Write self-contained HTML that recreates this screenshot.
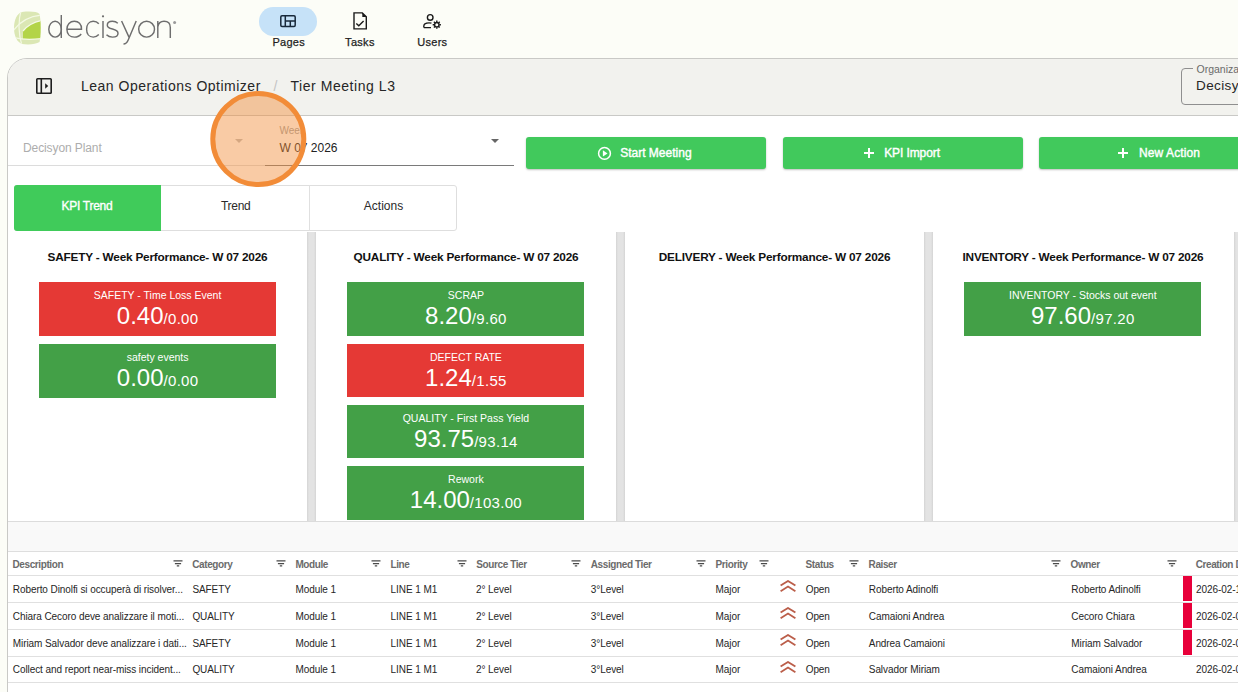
<!DOCTYPE html>
<html><head><meta charset="utf-8">
<style>
*{box-sizing:border-box;margin:0;padding:0}
html,body{width:1238px;height:692px;overflow:hidden;background:#fcfdf7;font-family:"Liberation Sans",sans-serif;color:#222;position:relative}
.a{position:absolute}
.t{position:absolute;white-space:nowrap;line-height:1}
#card{position:absolute;left:7px;top:58px;width:1300px;height:700px;border:1px solid #c9c9c6;border-top-left-radius:20px;background:#fff;overflow:hidden}
#hdr{position:absolute;left:0;top:0;width:100%;height:57px;background:#f2f2ee;border-bottom:1px solid #c9c9c6}
.kpi{position:absolute;width:237px;height:53.6px;color:#fff;text-align:center}
.red{background:#e53935}
.grn{background:#43a047}
.btn{position:absolute;top:137px;height:32px;width:240px;background:#41c95c;border-radius:3px;color:#fff;font-size:12px;box-shadow:0 1px 2px rgba(0,0,0,.25)}
.sep{position:absolute;top:231.5px;height:289.5px;background:linear-gradient(to right,#d4d4d4,#e3e3e3 22%,#e3e3e3 78%,#d4d4d4)}
.ptl{top:252.1px;font-size:11.8px;letter-spacing:-0.2px;font-weight:bold;text-align:center;color:#111}
.kl{left:0;width:100%;top:8.1px;font-size:10.5px;text-align:center;color:#fff}
.kv{left:0;width:100%;top:22px;text-align:center;color:#fff}
.kv .b{font-size:24px}
.kv .s{font-size:15px;letter-spacing:0.3px}
.th{top:559.5px;font-size:10px;font-weight:bold;color:#6b6b6b;letter-spacing:-0.4px}
.td{font-size:10px;color:#262626;letter-spacing:-0.08px}
</style></head><body>

<svg class="a" style="left:0;top:0" width="240" height="56" viewBox="0 0 240 56">
  <!-- sphere logo -->
  <defs><clipPath id="lg"><path d="M22 12 C30 11.2 37 11.5 39.5 14 C41 20 41 36 39.5 42 C36 44.5 28 44.8 22 44 C17 42 14 36 14 28 C14 20 17 13.5 22 12 Z"/></clipPath></defs>
  <g clip-path="url(#lg)">
    <rect x="10" y="8" width="34" height="40" fill="#dbe7b4"/>
    <path d="M23 31 C28 25 34 22 42 20.5 L42 38.5 C35 39.5 29 39.5 23 39 Z" fill="#b3d448"/>
    <path d="M13 31 C20 21 30 16 42 15" stroke="#f4f9e4" stroke-width="1.2" fill="none"/>
    <path d="M23 31 C28 25 34 22 42 20.5" stroke="#f4f9e4" stroke-width="1.2" fill="none"/>
    <path d="M21.5 9 C18 20 18 36 23 48" stroke="#f4f9e4" stroke-width="1.2" fill="none"/>
    <path d="M12 37 C20 39.5 30 40 42 38.5" stroke="#f4f9e4" stroke-width="1.2" fill="none"/>
  </g>
  <g stroke="#6e6e6e" stroke-width="1.45" fill="none" stroke-linecap="butt">
    <!-- d -->
    <ellipse cx="55.1" cy="29.2" rx="6.3" ry="7.9"/>
    <path d="M61.3 15 V38"/>
    <!-- e -->
    <path d="M66.9 29.2 H81.5 C81.7 24 78.5 21.3 74.3 21.3 C70 21.3 66.9 24.5 66.9 29.2 C66.9 34 70 37.1 74.5 37.1 C77.5 37.1 79.7 36 81.2 34"/>
    <!-- c -->
    <path d="M98.8 23.8 C97.3 22 95.5 21.3 93.2 21.3 C89 21.3 86.6 24.8 86.6 29.2 C86.6 33.8 89 37.1 93.2 37.1 C95.5 37.1 97.3 36.3 98.8 34.6"/>
    <!-- i -->
    <path d="M103 21 V38"/>
    <!-- s -->
    <path d="M117.8 23.2 C116.3 21.8 114.6 21.3 112.4 21.3 C109.3 21.3 107.3 22.9 107.3 25.2 C107.3 30.3 118 27.8 118 33.2 C118 35.7 115.8 37.1 112.5 37.1 C110 37.1 108 36.3 106.5 34.8"/>
    <!-- y -->
    <path d="M121.6 21 L129.2 37.6 M136.2 21 L128.2 40 C127 43 125.5 44 123.5 44"/>
    <!-- o -->
    <ellipse cx="146.6" cy="29.2" rx="7.9" ry="7.9"/>
    <!-- n -->
    <path d="M157.8 21 V38 M157.8 27 C158.5 23 161 21.3 164 21.3 C168 21.3 170.3 23.5 170.3 27.5 V38"/>
  </g>
  <circle cx="103" cy="16.3" r="1.1" fill="#6b6b6b"/>
  <circle cx="174.6" cy="22.6" r="1.5" fill="#9a9a9a"/>
  <!-- pages pill -->
</svg>
<div class="a" style="left:259.2px;top:7px;width:57.6px;height:28.5px;border-radius:14.25px;background:#c6e2f8"></div>
<svg class="a" style="left:0;top:0" width="480" height="56" viewBox="0 0 480 56">
  <g stroke="#18293a" stroke-width="1.5" fill="none">
    <rect x="280.8" y="15.7" width="14.4" height="10.8" rx="1.2"/>
    <path d="M285.3 15.7 V26.5 M285.3 21 H295.2 M290.3 21 V26.5"/>
  </g>
  <g stroke="#1a1a1a" stroke-width="1.4" fill="none" stroke-linejoin="miter">
    <path d="M354 12.9 H362.3 L366.3 16.9 V28.9 H354 Z"/>
    <path d="M356.3 23.4 L358.8 25.7 L363.6 21"/>
    <path d="M423.8 27.6 V26.2 C423.8 24 426 22.9 429 22.9 C430 22.9 430.8 23 431.5 23.2 M423.8 27.6 H431"/>
    <circle cx="430.2" cy="17.4" r="2.8"/>
    <circle cx="436.8" cy="24.7" r="2.2"/>
  </g>
  <g stroke="#1a1a1a" stroke-width="1.4">
    <path d="M436.8 20.6 V22.2 M436.8 27.2 V28.8 M432.7 24.7 H434.3 M439.3 24.7 H440.9 M433.9 21.8 L435 22.9 M438.6 26.5 L439.7 27.6 M433.9 27.6 L435 26.5 M438.6 22.9 L439.7 21.8"/>
  </g>
  <path d="M362.3 12.9 L366.3 16.9 H362.3 Z" fill="#1a1a1a"/>
</svg>
<div class="t" style="left:272.4px;top:36.8px;font-size:11px;letter-spacing:0.3px;color:#1f1f1f;-webkit-text-stroke:0.25px #1f1f1f">Pages</div>
<div class="t" style="left:345.1px;top:36.8px;font-size:11px;letter-spacing:0.3px;color:#1f1f1f;-webkit-text-stroke:0.25px #1f1f1f">Tasks</div>
<div class="t" style="left:417.2px;top:36.8px;font-size:11px;letter-spacing:0.3px;color:#1f1f1f;-webkit-text-stroke:0.25px #1f1f1f">Users</div>

<!--CARD-->
<div id="card"><div id="hdr"></div></div>

<svg class="a" style="left:34px;top:76px" width="20" height="20" viewBox="0 0 20 20">
  <rect x="2.8" y="2.8" width="14.4" height="14.4" rx="0.8" fill="none" stroke="#1e1e1e" stroke-width="1.6"/>
  <path d="M7.3 2.8 V17.2" stroke="#1e1e1e" stroke-width="1.6"/>
  <path d="M11.2 7.2 L14.2 10 L11.2 12.8 Z" fill="#1e1e1e"/>
</svg>
<div class="t" style="left:81px;top:79px;font-size:14px;letter-spacing:0.5px;color:#262626">Lean Operations Optimizer</div>
<div class="t" style="left:273.5px;top:79px;font-size:14px;color:#c4c4c4">/</div>
<div class="t" style="left:290.5px;top:79px;font-size:14px;letter-spacing:0.55px;color:#262626">Tier Meeting L3</div>
<div class="a" style="left:1181.4px;top:68px;width:80px;height:37px;border:1px solid #8f8f8f;border-radius:4px"></div>
<div class="a" style="left:1193px;top:62px;width:60px;height:10px;background:#f2f2ee"></div>
<div class="t" style="left:1196.5px;top:63.5px;font-size:10.5px;color:#6a6a6a">Organization</div>
<div class="t" style="left:1196px;top:78.5px;font-size:13.5px;letter-spacing:0.4px;color:#262626">Decisyon</div>


<div class="t" style="left:23px;top:141.5px;font-size:12px;color:#adadad;letter-spacing:-0.1px">Decisyon Plant</div>
<div class="a" style="left:8px;top:164.7px;width:257px;height:1px;background:#dcdcdc"></div>
<div class="a" style="left:234.6px;top:138.5px;width:0;height:0;border-left:4.5px solid transparent;border-right:4.5px solid transparent;border-top:4.5px solid #bdbdbd"></div>
<div class="t" style="left:279.5px;top:125.5px;font-size:10px;color:#9e9e9e">Week</div>
<div class="t" style="left:279.5px;top:141.5px;font-size:12px;color:#222">W 07 2026</div>
<div class="a" style="left:265px;top:164.7px;width:249px;height:1px;background:#7a7a7a"></div>
<div class="a" style="left:490.5px;top:138.8px;width:0;height:0;border-left:4.5px solid transparent;border-right:4.5px solid transparent;border-top:4.5px solid #666"></div>

<div class="btn" style="left:526.4px;width:239.2px"></div>
<svg class="a" style="left:596px;top:144.5px" width="17" height="17" viewBox="0 0 17 17"><circle cx="8.5" cy="8.4" r="5.9" fill="none" stroke="#fff" stroke-width="1.5"/><path d="M6.9 5.3 L11.5 8.4 L6.9 11.5 Z" fill="#fff"/></svg>
<div class="t" style="left:620.2px;top:147px;font-size:12px;color:#fff;-webkit-text-stroke:0.4px #fff">Start Meeting</div>

<div class="btn" style="left:783.1px;width:239.6px"></div>
<svg class="a" style="left:862px;top:145.5px" width="14" height="14" viewBox="0 0 14 14"><path d="M7 2 V12 M2 7 H12" stroke="#fff" stroke-width="2"/></svg>
<div class="t" style="left:884.2px;top:147px;font-size:12px;color:#fff;-webkit-text-stroke:0.4px #fff;letter-spacing:-0.1px">KPI Import</div>

<div class="btn" style="left:1039.2px;width:240px"></div>
<svg class="a" style="left:1116px;top:145.5px" width="14" height="14" viewBox="0 0 14 14"><path d="M7 2 V12 M2 7 H12" stroke="#fff" stroke-width="2"/></svg>
<div class="t" style="left:1139px;top:147px;font-size:12px;color:#fff;-webkit-text-stroke:0.4px #fff;letter-spacing:0.1px">New Action</div>


<div class="a" style="left:14px;top:184.5px;width:443px;height:46.5px;border:1px solid #dedede;border-radius:3px;background:#fff"></div>
<div class="a" style="left:14px;top:184.5px;width:147px;height:46.5px;background:#40cb5a;border-radius:3px 0 0 3px"></div>
<div class="a" style="left:309.4px;top:185px;width:1px;height:45.5px;background:#e0e0e0"></div>
<div class="t" style="left:61.6px;top:200px;font-size:12px;color:#fff;-webkit-text-stroke:0.35px #fff;letter-spacing:-0.3px">KPI Trend</div>
<div class="t" style="left:221px;top:200px;font-size:12px;color:#2a2a2a;letter-spacing:-0.3px">Trend</div>
<div class="t" style="left:363.8px;top:200px;font-size:12px;color:#2a2a2a">Actions</div>


<div class="sep" style="left:307px;width:9px"></div>
<div class="sep" style="left:616px;width:9px"></div>
<div class="sep" style="left:924px;width:9px"></div>
<div class="sep" style="left:1233.5px;width:9px"></div>
<div class="t ptl" style="left:8px;width:299px">SAFETY - Week Performance- W 07 2026</div>
<div class="t ptl" style="left:316px;width:300px">QUALITY - Week Performance- W 07 2026</div>
<div class="t ptl" style="left:625px;width:299px">DELIVERY - Week Performance- W 07 2026</div>
<div class="t ptl" style="left:933px;width:300px">INVENTORY - Week Performance- W 07 2026</div>
<div class="kpi red" style="left:39.1px;top:282.3px"><div class="t kl">SAFETY - Time Loss Event</div><div class="t kv"><span class="b">0.40</span><span class="s">/0.00</span></div></div>
<div class="kpi grn" style="left:39.1px;top:344.4px"><div class="t kl">safety events</div><div class="t kv"><span class="b">0.00</span><span class="s">/0.00</span></div></div>
<div class="kpi grn" style="left:347.4px;top:282.2px"><div class="t kl">SCRAP</div><div class="t kv"><span class="b">8.20</span><span class="s">/9.60</span></div></div>
<div class="kpi red" style="left:347.4px;top:343.7px"><div class="t kl">DEFECT RATE</div><div class="t kv"><span class="b">1.24</span><span class="s">/1.55</span></div></div>
<div class="kpi grn" style="left:347.4px;top:404.8px"><div class="t kl">QUALITY - First Pass Yield</div><div class="t kv"><span class="b">93.75</span><span class="s">/93.14</span></div></div>
<div class="kpi grn" style="left:347.4px;top:466.0px"><div class="t kl">Rework</div><div class="t kv"><span class="b">14.00</span><span class="s">/103.00</span></div></div>
<div class="kpi grn" style="left:964.3px;top:282.3px"><div class="t kl">INVENTORY - Stocks out event</div><div class="t kv"><span class="b">97.60</span><span class="s">/97.20</span></div></div>

<div class="a" style="left:8px;top:521px;width:1240px;height:1px;background:#dcdcdc"></div>
<div class="a" style="left:8px;top:522px;width:1240px;height:29px;background:#f9f9f9"></div>
<div class="a" style="left:8px;top:551px;width:1240px;height:1px;background:#dedede"></div>

<div class="t th" style="left:12.5px">Description</div>
<svg class="a" style="left:173.4px;top:558px" width="10" height="10" viewBox="0 0 10 10"><path d="M0.5 2.8 H9.5 M1.9 5.6 H8.1 M3.8 7.8 H6.2" stroke="#4a4a4a" stroke-width="1.3"/></svg>
<div class="t th" style="left:192.3px">Category</div>
<svg class="a" style="left:275.8px;top:558px" width="10" height="10" viewBox="0 0 10 10"><path d="M0.5 2.8 H9.5 M1.9 5.6 H8.1 M3.8 7.8 H6.2" stroke="#4a4a4a" stroke-width="1.3"/></svg>
<div class="t th" style="left:295.4px">Module</div>
<svg class="a" style="left:371.3px;top:558px" width="10" height="10" viewBox="0 0 10 10"><path d="M0.5 2.8 H9.5 M1.9 5.6 H8.1 M3.8 7.8 H6.2" stroke="#4a4a4a" stroke-width="1.3"/></svg>
<div class="t th" style="left:390.5px">Line</div>
<svg class="a" style="left:456.9px;top:558px" width="10" height="10" viewBox="0 0 10 10"><path d="M0.5 2.8 H9.5 M1.9 5.6 H8.1 M3.8 7.8 H6.2" stroke="#4a4a4a" stroke-width="1.3"/></svg>
<div class="t th" style="left:476.3px">Source Tier</div>
<svg class="a" style="left:571.2px;top:558px" width="10" height="10" viewBox="0 0 10 10"><path d="M0.5 2.8 H9.5 M1.9 5.6 H8.1 M3.8 7.8 H6.2" stroke="#4a4a4a" stroke-width="1.3"/></svg>
<div class="t th" style="left:590.8px">Assigned Tier</div>
<svg class="a" style="left:696.2px;top:558px" width="10" height="10" viewBox="0 0 10 10"><path d="M0.5 2.8 H9.5 M1.9 5.6 H8.1 M3.8 7.8 H6.2" stroke="#4a4a4a" stroke-width="1.3"/></svg>
<div class="t th" style="left:715.6px">Priority</div>
<svg class="a" style="left:759.1px;top:558px" width="10" height="10" viewBox="0 0 10 10"><path d="M0.5 2.8 H9.5 M1.9 5.6 H8.1 M3.8 7.8 H6.2" stroke="#4a4a4a" stroke-width="1.3"/></svg>
<div class="t th" style="left:805.6px">Status</div>
<svg class="a" style="left:849.2px;top:558px" width="10" height="10" viewBox="0 0 10 10"><path d="M0.5 2.8 H9.5 M1.9 5.6 H8.1 M3.8 7.8 H6.2" stroke="#4a4a4a" stroke-width="1.3"/></svg>
<div class="t th" style="left:868.6px">Raiser</div>
<svg class="a" style="left:1051.2px;top:558px" width="10" height="10" viewBox="0 0 10 10"><path d="M0.5 2.8 H9.5 M1.9 5.6 H8.1 M3.8 7.8 H6.2" stroke="#4a4a4a" stroke-width="1.3"/></svg>
<div class="t th" style="left:1070.6px">Owner</div>
<svg class="a" style="left:1167.2px;top:558px" width="10" height="10" viewBox="0 0 10 10"><path d="M0.5 2.8 H9.5 M1.9 5.6 H8.1 M3.8 7.8 H6.2" stroke="#4a4a4a" stroke-width="1.3"/></svg>
<div class="t th" style="left:1195.7px">Creation Date</div>
<div class="t td" style="left:12.8px;top:584.53px">Roberto Dinolfi si occuperà di risolver...</div>
<div class="t td" style="left:192.4px;top:584.53px">SAFETY</div>
<div class="t td" style="left:295.5px;top:584.53px">Module 1</div>
<div class="t td" style="left:390.6px;top:584.53px">LINE 1 M1</div>
<div class="t td" style="left:476px;top:584.53px">2° Level</div>
<div class="t td" style="left:590.8px;top:584.53px">3°Level</div>
<div class="t td" style="left:715.6px;top:584.53px">Major</div>
<div class="t td" style="left:805.7px;top:584.53px">Open</div>
<div class="t td" style="left:868.8px;top:584.53px">Roberto Adinolfi</div>
<div class="t td" style="left:1071.3px;top:584.53px">Roberto Adinolfi</div>
<div class="t td" style="left:1196px;top:584.53px">2026-02-10</div>
<svg class="a" style="left:779px;top:580.00px" width="18" height="13" viewBox="0 0 18 13"><path d="M1.6 5.6 L9 1 L16.4 5.6 M1.6 11.2 L9 6.6 L16.4 11.2" stroke="#bb5e4a" stroke-width="1.8" fill="none"/></svg>
<div class="a" style="left:1183.2px;top:575.90px;width:9px;height:25.40px;background:#e8003a"></div>
<div class="t td" style="left:12.8px;top:611.73px">Chiara Cecoro deve analizzare il moti...</div>
<div class="t td" style="left:192.4px;top:611.73px">QUALITY</div>
<div class="t td" style="left:295.5px;top:611.73px">Module 1</div>
<div class="t td" style="left:390.6px;top:611.73px">LINE 1 M1</div>
<div class="t td" style="left:476px;top:611.73px">2° Level</div>
<div class="t td" style="left:590.8px;top:611.73px">3°Level</div>
<div class="t td" style="left:715.6px;top:611.73px">Major</div>
<div class="t td" style="left:805.7px;top:611.73px">Open</div>
<div class="t td" style="left:868.8px;top:611.73px">Camaioni Andrea</div>
<div class="t td" style="left:1071.3px;top:611.73px">Cecoro Chiara</div>
<div class="t td" style="left:1196px;top:611.73px">2026-02-09</div>
<svg class="a" style="left:779px;top:607.20px" width="18" height="13" viewBox="0 0 18 13"><path d="M1.6 5.6 L9 1 L16.4 5.6 M1.6 11.2 L9 6.6 L16.4 11.2" stroke="#bb5e4a" stroke-width="1.8" fill="none"/></svg>
<div class="a" style="left:1183.2px;top:603.10px;width:9px;height:25.00px;background:#e8003a"></div>
<div class="t td" style="left:12.8px;top:638.53px">Miriam Salvador deve analizzare i dati...</div>
<div class="t td" style="left:192.4px;top:638.53px">SAFETY</div>
<div class="t td" style="left:295.5px;top:638.53px">Module 1</div>
<div class="t td" style="left:390.6px;top:638.53px">LINE 1 M1</div>
<div class="t td" style="left:476px;top:638.53px">2° Level</div>
<div class="t td" style="left:590.8px;top:638.53px">3°Level</div>
<div class="t td" style="left:715.6px;top:638.53px">Major</div>
<div class="t td" style="left:805.7px;top:638.53px">Open</div>
<div class="t td" style="left:868.8px;top:638.53px">Andrea Camaioni</div>
<div class="t td" style="left:1071.3px;top:638.53px">Miriam Salvador</div>
<div class="t td" style="left:1196px;top:638.53px">2026-02-05</div>
<svg class="a" style="left:779px;top:634.00px" width="18" height="13" viewBox="0 0 18 13"><path d="M1.6 5.6 L9 1 L16.4 5.6 M1.6 11.2 L9 6.6 L16.4 11.2" stroke="#bb5e4a" stroke-width="1.8" fill="none"/></svg>
<div class="a" style="left:1183.2px;top:629.90px;width:9px;height:24.80px;background:#e8003a"></div>
<div class="t td" style="left:12.8px;top:665.13px">Collect and report near-miss incident...</div>
<div class="t td" style="left:192.4px;top:665.13px">QUALITY</div>
<div class="t td" style="left:295.5px;top:665.13px">Module 1</div>
<div class="t td" style="left:390.6px;top:665.13px">LINE 1 M1</div>
<div class="t td" style="left:476px;top:665.13px">2° Level</div>
<div class="t td" style="left:590.8px;top:665.13px">3°Level</div>
<div class="t td" style="left:715.6px;top:665.13px">Major</div>
<div class="t td" style="left:805.7px;top:665.13px">Open</div>
<div class="t td" style="left:868.8px;top:665.13px">Salvador Miriam</div>
<div class="t td" style="left:1071.3px;top:665.13px">Camaioni Andrea</div>
<div class="t td" style="left:1196px;top:665.13px">2026-02-03</div>
<svg class="a" style="left:779px;top:660.60px" width="18" height="13" viewBox="0 0 18 13"><path d="M1.6 5.6 L9 1 L16.4 5.6 M1.6 11.2 L9 6.6 L16.4 11.2" stroke="#bb5e4a" stroke-width="1.8" fill="none"/></svg>
<div class="a" style="left:8px;top:575px;width:1240px;height:1px;background:#e0e0e0"></div>
<div class="a" style="left:8px;top:602.2px;width:1240px;height:1px;background:#e0e0e0"></div>
<div class="a" style="left:8px;top:629.0px;width:1240px;height:1px;background:#e0e0e0"></div>
<div class="a" style="left:8px;top:655.6px;width:1240px;height:1px;background:#e0e0e0"></div>
<div class="a" style="left:8px;top:682.3px;width:1240px;height:1px;background:#e0e0e0"></div>

<svg class="a" style="left:200px;top:81px" width="118" height="118" viewBox="0 0 118 118"><circle cx="58.3" cy="58" r="45.5" fill="rgba(242,140,56,0.45)" stroke="#f28c38" stroke-width="5"/></svg>
</body></html>
